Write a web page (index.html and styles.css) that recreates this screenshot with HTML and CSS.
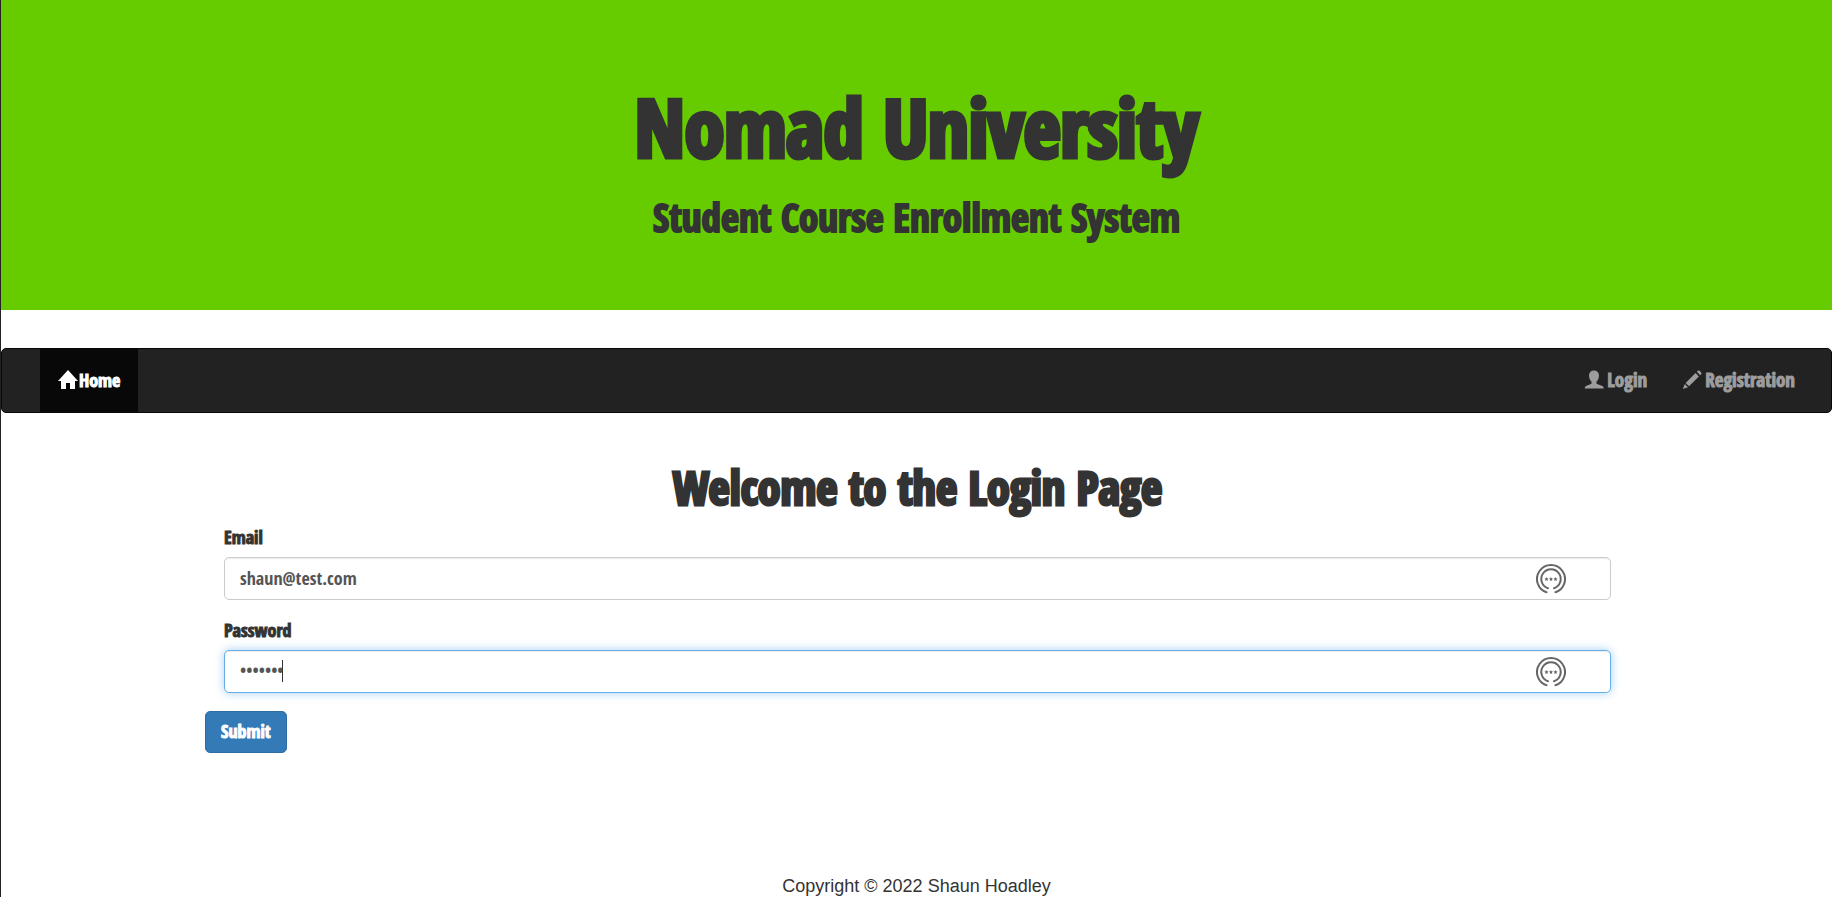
FILE: index.html
```html
<!DOCTYPE html>
<html lang="en">
<head>
<meta charset="utf-8">
<title>Nomad University</title>
<link rel="stylesheet" href="styles.css">
</head>
<body>
<header class="banner">
  <h1 class="banner-title">Nomad University</h1>
  <p class="banner-subtitle">Student Course Enrollment System</p>
</header>
<nav class="navbar">
  <a class="nav-link active" href="#"><svg class="icon" viewBox="0 0 20 20" aria-hidden="true"><path d="M10 0 20 11h-3v8h-5v-6H8v6H3v-8H0z"/></svg>Home</a>
  <div class="nav-right">
    <a class="nav-link" href="#"><svg class="icon" viewBox="0 0 20 20" aria-hidden="true"><path d="M10 .5c3.200 0 5 2 5 5 0 2.500-1 5-2.500 6v2c1 1 6 2 6.500 3 .7.700.8 2 .8 2H.7s.1-1.300.8-2c.5-1 5-2 6-3v-2C6 10.500 5 8 5 5.500c0-3 1.800-5 5-5z"/></svg>Login</a>
    <a class="nav-link" href="#"><svg class="icon" viewBox="0 0 20 20" aria-hidden="true"><path d="M14.800 1.800l1-1q.9-.8 1.800 0l1.600 1.600q.8.900 0 1.800l-1 1zM13.500 3l3.400 3.400L7 16.300l-3.400-3.400zM2.800 14l3.200 3.200L.8 19z"/></svg>Registration</a>
  </div>
</nav>
<main class="container">
  <h2 class="page-title">Welcome to the Login Page</h2>
  <form>
    <div class="form-group">
      <label for="email">Email</label>
      <div class="field">
        <input class="form-control" id="email" type="email" value="shaun@test.com">
        <svg class="key-icon" viewBox="0 0 30 30" aria-hidden="true"><g class="ring"><path d="M10.500 28.300A14 14 0 1 1 19.500 28.300"/><path d="M12 24.200A9.700 9.700 0 1 1 18 24.200"/></g><g class="stars"><path id="star" d="M10.500 13l.6 1.300 1.400.2-1 1 .2 1.500-1.200-.7-1.200.7.200-1.500-1-1 1.400-.2z"/><use href="#star" x="4.500"/><use href="#star" x="9"/></g></svg>
      </div>
    </div>
    <div class="form-group">
      <label for="password">Password</label>
      <div class="field">
        <input class="form-control password" id="password" type="password" value="student">
        <span class="caret"></span>
        <svg class="key-icon" viewBox="0 0 30 30" aria-hidden="true"><g class="ring"><path d="M10.500 28.300A14 14 0 1 1 19.500 28.300"/><path d="M12 24.200A9.700 9.700 0 1 1 18 24.200"/></g><g class="stars"><use href="#star"/><use href="#star" x="4.500"/><use href="#star" x="9"/></g></svg>
      </div>
    </div>
    <button class="btn" type="submit">Submit</button>
  </form>
</main>
<footer class="footer">Copyright © 2022 Shaun Hoadley</footer>
<script src="focus.js"></script>
</body>
</html>
```
FILE: focus.js
```js
document.getElementById("password").focus();
```
FILE: styles.css
```css
* { box-sizing: border-box; }
body {
  margin: 0;
  border-left: 1px solid #222;
  min-height: 100vh;
  background: #fff;
  color: #333;
  font-family: Impact, Haettenschweiler, "Open Sans Condensed", "Liberation Sans Narrow", "Liberation Sans", sans-serif;
  font-size: 18px;
  line-height: 24px;
}
.banner {
  padding: 70px 20px 66px;
  background: #6c0;
  text-align: center;
}
.banner-title {
  margin: 0;
  font-size: 80px;
  line-height: 112px;
  font-weight: 800;
  -webkit-text-stroke: 5px #333;
}
.banner-subtitle {
  margin: 8px 0 0;
  font-size: 39px;
  line-height: 54px;
  font-weight: 800;
  -webkit-text-stroke: 2px #333;
}
.navbar {
  display: flex;
  justify-content: space-between;
  margin-top: 38px;
  padding: 0 18px 0 38px;
  border: 1px solid #080808;
  border-radius: 5px;
  background: #222;
}
.nav-right { display: flex; }
.nav-link {
  display: flex;
  align-items: center;
  gap: 1px;
  padding: 18px 18px 20px;
  height: 63px;
  color: #9d9d9d;
  font-weight: 800;
  -webkit-text-stroke: 1px currentColor;
  text-decoration: none;
}
.nav-link.active { background: #080808; color: #fff; }
.nav-right .nav-link { gap: 3px; font-size: 19px; padding-left: 17px; }
.icon { width: 20px; height: 20px; fill: currentColor; stroke: none; }
.container { padding: 0 221px 0 223px; }
.page-title {
  margin: 46px 0 10px;
  font-size: 46px;
  line-height: 56px;
  text-align: center;
  font-weight: 800;
  -webkit-text-stroke: 3px #333;
}
.form-group { margin-bottom: 18px; }
label {
  display: block;
  margin-bottom: 8px;
  font-weight: 800;
  -webkit-text-stroke: 1px #333;
}
.field { position: relative; }
.form-control {
  display: block;
  width: 100%;
  height: 43px;
  padding: 6px 15px 8px;
  border: 1px solid #ccc;
  border-radius: 5px;
  background: #fff;
  box-shadow: inset 0 1px 1px rgba(0, 0, 0, .08);
  color: #555;
  font: inherit;
  font-weight: 800;
}
.form-control:focus {
  border-color: #66afe9;
  outline: 0;
  box-shadow: inset 0 1px 1px rgba(0, 0, 0, .08), 0 0 10px rgba(102, 175, 233, .6);
}
.password { font-size: 17px; caret-color: transparent; }
.caret { position: absolute; top: 10px; left: 58px; width: 1px; height: 22px; background: #333; }
.key-icon { position: absolute; top: 7px; right: 45px; width: 30px; height: 30px; }
.ring { fill: none; stroke: #666; stroke-width: 2; stroke-linecap: round; }
.stars { fill: #666; }
.btn {
  display: block;
  height: 42px;
  margin-left: -19px;
  padding: 0 15px 2px;
  border: 1px solid #2e6da4;
  border-radius: 5px;
  background: #337ab7;
  color: #fff;
  font: inherit;
  font-weight: 800;
  -webkit-text-stroke: 1px #fff;
}
.footer {
  padding-top: 121px;
  font-family: Arial, "Liberation Sans", sans-serif;
  text-align: center;
}
```
